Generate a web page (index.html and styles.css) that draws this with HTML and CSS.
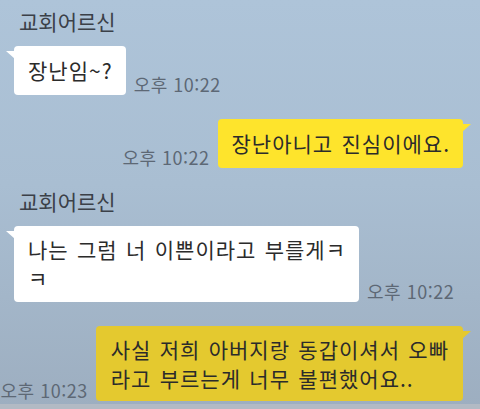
FILE: index.html
```html
<!DOCTYPE html>
<html lang="ko">
<head>
  <meta charset="UTF-8" />
  <meta name="viewport" content="width=device-width, initial-scale=1.0"/>
  <title>카카오톡 대화</title>
  <link rel="stylesheet" href="styles.css">
</head>
<body>
  <div class="chat">
    <div class="msg in">
      <div class="name">교회어르신</div>
      <div class="row">
        <div class="bubble white">장난임~?</div>
        <span class="time">오후 10:22</span>
      </div>
    </div>

    <div class="msg out">
      <div class="row">
        <span class="time">오후 10:22</span>
        <div class="bubble yellow">장난아니고 진심이에요.</div>
      </div>
    </div>

    <div class="msg in">
      <div class="name">교회어르신</div>
      <div class="row">
        <div class="bubble white two">나는 그럼 너 이쁜이라고 부를게ㅋ<br>ㅋ</div>
        <span class="time">오후 10:22</span>
      </div>
    </div>

    <div class="msg out">
      <div class="row">
        <span class="time">오후 10:23</span>
        <div class="bubble yellow dim">사실 저희 아버지랑 동갑이셔서 오빠<br>라고 부르는게 너무 불편했어요..</div>
      </div>
    </div>
  </div>
  <div class="bottom"></div>
</body>
</html>
```

FILE: styles.css
```css
:root {
  --bg-top: #aec4d9;
  --bg-bottom: #9daec0;
  --yellow: #fee42c;
  --yellow-dim: #e4c92f;
  --text: #2b2b2b;
  --time: #5d6875;
}

html, body {
  margin: 0;
  height: 409px;
  overflow: hidden;
}

body {
  font-family: "Noto Sans CJK KR", "Noto Sans", sans-serif;
  background: linear-gradient(to bottom, var(--bg-top) 0%, #a9bed2 45%, var(--bg-bottom) 100%);
  color: var(--text);
  display: flex;
  flex-direction: column;
}

.chat {
  flex: 1;
  min-height: 0;
  display: flex;
  flex-direction: column;
  padding: 7px 17px 0 14px;
}

.msg.out { margin-top: 24px; }
.msg.in + .msg.in,
.msg.out + .msg.in { margin-top: 19px; }
.msg.in:first-child { margin-top: 0; }

.name {
  font-size: 21px;
  line-height: 28px;
  color: #3b4048;
  padding-left: 5px;
  margin-bottom: 11px;
}

.row {
  display: flex;
  align-items: flex-end;
  gap: 8px;
}
.out .row { justify-content: flex-end; }

.bubble {
  position: relative;
  font-size: 21px;
  letter-spacing: 1px;
  word-spacing: 1.5px;
  line-height: 29px;
  padding: 10px 13px 10px 14px;
  border-radius: 4px;
  white-space: nowrap;
  flex-shrink: 0;
}
.bubble.two { padding-top: 9px; padding-bottom: 9px; }
.bubble.white { background: #fff; }
.bubble.yellow { background: var(--yellow); }
.bubble.yellow.dim { background: var(--yellow-dim); padding: 9px 14px 8px 15px; }

.bubble::before {
  content: "";
  position: absolute;
  top: 5px;
  width: 9px;
  height: 8px;
  background: inherit;
}
.in .bubble::before {
  left: -8px;
  clip-path: polygon(0 0, 100% 0, 100% 100%);
}
.out .bubble::before {
  right: -8px;
  clip-path: polygon(0 0, 100% 0, 0 100%);
}

.time {
  font-size: 18px;
  letter-spacing: 0.5px;
  line-height: 20px;
  color: var(--time);
  white-space: nowrap;
  flex-shrink: 0;
  margin-bottom: 1px;
}

.bottom {
  flex-shrink: 0;
  height: 5px;
  background: #b2bac4;
}
```
